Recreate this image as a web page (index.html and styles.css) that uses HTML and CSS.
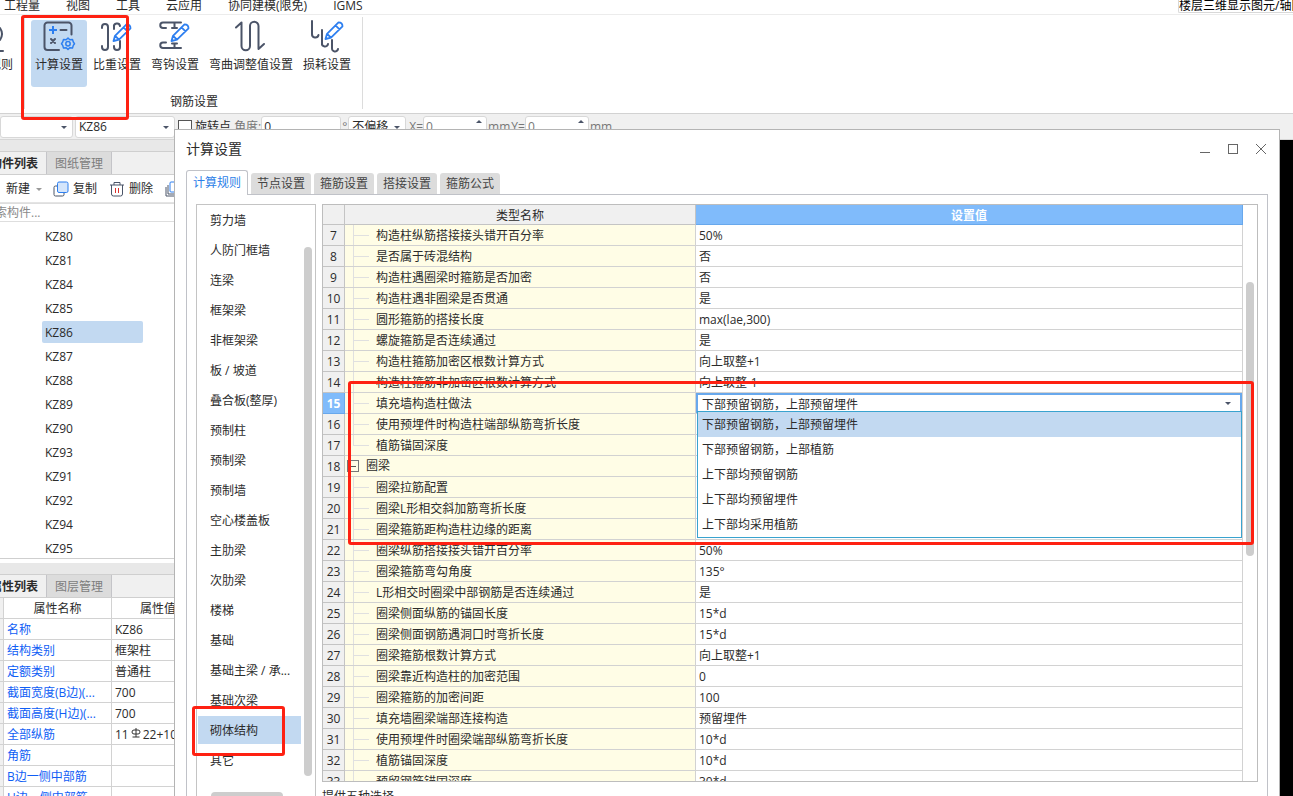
FILE: index.html
```html
<!DOCTYPE html>
<html lang="zh-CN">
<head>
<meta charset="utf-8">
<title>计算设置</title>
<link rel="stylesheet" href="styles.css">
</head>
<body>
<svg class="defs" aria-hidden="true">
  <symbol id="pencil" viewBox="0 0 34 34"><path d="M13.500 21l1.500-5.200L26.500 4.300c2.500 0 4 1.500 4 4L19 19.700zM15.200 16l3.800 3.700M23.500 7.300l4 4" fill="none" stroke="#2d7ff0" stroke-width="1.800" stroke-linejoin="round"/></symbol>
</svg>
<div class="app">
  <nav class="menubar">
    <a href="#">工程量</a><a href="#">视图</a><a href="#">工具</a><a href="#">云应用</a><a href="#">协同建模(限免)</a><a href="#">IGMS</a>
    <div class="menu-search">楼层三维显示图元/轴网</div>
  </nav>
  <div class="ribbon">
    <div class="ribbon-prev">
      <svg width="10" height="34" viewBox="0 0 10 34"><path d="M0 8q4 6 0 12M0 31h3" class="ink"/></svg>
      <span>规则</span>
    </div>
    <div class="ribbon-group">
      <div class="ribbon-buttons">
        <button class="tool active">
          <svg width="34" height="34" viewBox="0 0 34 34"><path class="ink" d="M29.500 14.500V5.500a3 3 0 0 0-3-3H5.500a3 3 0 0 0-3 3V27a3 3 0 0 0 3 3H17M18.500 10H24.500M9 19l4 4M13 19l-4 4"/><path class="accent" d="M7 10h8M11 6v8"/><path class="accent thin" d="M26 18l1.800 1.700 2.700-.3.800 2.600 1.200 1.700-1.200 1.700-.8 2.600-2.700-.3L26 29.400l-1.800-1.700-2.700.3-.8-2.600-1.200-1.700 1.200-1.700.8-2.600 2.700.3z"/><circle class="accent thin" cx="26" cy="23.700" r="2.200"/></svg>
          <span>计算设置</span></button>
        <button class="tool">
          <svg width="34" height="34" viewBox="0 0 34 34"><path class="ink" d="M2 8V7a3 3 0 0 1 6 0V27a3 3 0 0 1-6 0V26M14 9V7a3 3 0 0 1 6-1M20 21V27a3 3 0 0 1-6 0V26"/><use href="#pencil" width="34" height="34"/></svg>
          <span>比重设置</span></button>
        <button class="tool">
          <svg width="34" height="34" viewBox="0 0 34 34"><path class="ink" d="M23 2.500H5a2.700 2.700 0 0 0 0 5.500H8M16.500 3v5M14 8h5M23 28H5a2.700 2.700 0 0 1 0-5.500H8M16.500 28v-4M14 23.500h5"/><use href="#pencil" width="34" height="34"/></svg>
          <span>弯钩设置</span></button>
        <button class="tool">
          <svg width="34" height="34" viewBox="0 0 34 34"><path class="ink" d="M2 7.500L7.500 2.500V26a4.200 4.200 0 0 0 8.500 0V6a4.200 4.200 0 0 1 8.500 0V29L30 24"/></svg>
          <span>弯曲调整值设置</span></button>
        <button class="tool">
          <svg width="34" height="34" viewBox="0 0 34 34"><path class="ink" d="M2 1V14a3.300 3.300 0 0 0 6.500 1M12 10V23a3 3 0 0 0 6 1M22 20V28a3 3 0 0 0 6 1"/><use href="#pencil" x="2" y="-2" width="34" height="34"/></svg>
          <span>损耗设置</span></button>
      </div>
      <div class="group-label">钢筋设置</div>
    </div>
  </div>
  <div class="optionbar">
    <span class="pick pick-first"><select aria-label="楼层"><option></option></select></span>
    <span class="pick pick-member"><select aria-label="构件"><option>KZ86</option></select></span>
    <label class="check"><input type="checkbox">旋转点</label>
    <label class="field">角度:<input type="text" class="angle" value="0"></label><span class="dim">°</span>
    <span class="pick pick-offset"><select aria-label="偏移"><option>不偏移</option></select></span>
    <label class="field spin">X=<input type="text" value="0"></label><span class="dim">mm</span>
    <label class="field spin">Y=<input type="text" value="0"></label><span class="dim">mm</span>
  </div>
  <div class="workspace">
    <aside class="side">
      <div class="band"></div>
      <div class="side-tabs"><button class="on">构件列表</button><button>图纸管理</button></div>
      <div class="side-tools">
        <button class="new">新建</button><i class="caret"></i>
        <button><svg width="16" height="16" viewBox="0 0 16 16"><rect x="1" y="5" width="10" height="10" rx="1.500" fill="#fff" stroke="#4a5468"/><rect x="4.500" y="1" width="10.500" height="10.500" rx="1.500" fill="#d4e5fb" stroke="#2d7ff0"/></svg>复制</button>
        <button><svg width="16" height="16" viewBox="0 0 16 16"><path d="M1 4h14M5 4V1.500h6V4M2.500 4v9a2 2 0 0 0 2 2h7a2 2 0 0 0 2-2V4" fill="none" stroke="#4a5468"/><path d="M6.500 7v5M9.500 7v5" stroke="#d9302c"/></svg>删除</button>
        <button aria-label="层间复制"><svg width="16" height="16" viewBox="0 0 16 16"><rect x="5" y="1" width="10" height="10" rx="1" fill="#fff" stroke="#2d7ff0"/><path d="M3 4v9h9M1 6v9h9" fill="none" stroke="#4a5468"/></svg></button>
      </div>
      <input class="side-search" type="text" placeholder="搜索构件..." aria-label="搜索构件">
      <ul class="members">
        <li>KZ80</li><li>KZ81</li><li>KZ84</li><li>KZ85</li><li class="on">KZ86</li><li>KZ87</li><li>KZ88</li><li>KZ89</li><li>KZ90</li><li>KZ93</li><li>KZ91</li><li>KZ92</li><li>KZ94</li><li>KZ95</li>
      </ul>
      <div class="band"></div>
      <div class="side-tabs"><button class="on">属性列表</button><button>图层管理</button></div>
      <table class="props">
        <thead><tr><th class="gut"></th><th class="pn">属性名称</th><th>属性值</th></tr></thead>
        <tbody>
          <tr><td class="gut"></td><td>名称</td><td>KZ86</td></tr>
          <tr><td class="gut"></td><td>结构类别</td><td>框架柱</td></tr>
          <tr><td class="gut"></td><td>定额类别</td><td>普通柱</td></tr>
          <tr><td class="gut"></td><td>截面宽度(B边)(...</td><td>700</td></tr>
          <tr><td class="gut"></td><td>截面高度(H边)(...</td><td>700</td></tr>
          <tr><td class="gut"></td><td>全部纵筋</td><td>11<svg class="rebar" width="12" height="12" viewBox="0 0 12 12"><path d="M6 1v9M2.500 10h7" /><rect x="2" y="3" width="8" height="4" rx="2"/></svg>22+10</td></tr>
          <tr><td class="gut"></td><td>角筋</td><td></td></tr>
          <tr><td class="gut"></td><td>B边一侧中部筋</td><td></td></tr>
          <tr><td class="gut"></td><td>H边一侧中部筋</td><td></td></tr>
        </tbody>
      </table>
    </aside>
    <div class="canvas"></div>
  </div>
</div>

<section class="dialog" role="dialog" aria-labelledby="dlg-title">
  <header class="titlebar">
    <h1 id="dlg-title">计算设置</h1>
    <button aria-label="最小化"><svg width="12" height="12" viewBox="0 0 12 12"><path d="M1 9.500h10"/></svg></button>
    <button aria-label="最大化"><svg width="12" height="12" viewBox="0 0 12 12"><rect x="1.500" y="1.500" width="9" height="9"/></svg></button>
    <button aria-label="关闭"><svg width="12" height="12" viewBox="0 0 12 12"><path d="M1 1l10 10M11 1L1 11"/></svg></button>
  </header>
  <div class="tabs"><button class="on">计算规则</button><button>节点设置</button><button>箍筋设置</button><button>搭接设置</button><button>箍筋公式</button></div>
  <div class="panel">
    <div class="kinds">
      <ul>
        <li>剪力墙</li><li>人防门框墙</li><li>连梁</li><li>框架梁</li><li>非框架梁</li><li>板 / 坡道</li><li>叠合板(整厚)</li><li>预制柱</li><li>预制梁</li><li>预制墙</li><li>空心楼盖板</li><li>主肋梁</li><li>次肋梁</li><li>楼梯</li><li>基础</li><li>基础主梁 / 承...</li><li>基础次梁</li><li class="on">砌体结构</li><li>其它</li>
      </ul>
      <div class="kinds-track"><div class="thumb"></div></div>
      <div class="kinds-hthumb"></div>
    </div>
    <div class="content">
      <div class="frame">
        <table class="rules">
          <thead><tr><th class="num"></th><th class="name">类型名称</th><th class="val">设置值</th></tr></thead>
          <tbody>
            <tr><th>7</th><td><span class="leaf">构造柱纵筋搭接接头错开百分率</span></td><td>50%</td></tr>
            <tr><th>8</th><td><span class="leaf">是否属于砖混结构</span></td><td>否</td></tr>
            <tr><th>9</th><td><span class="leaf">构造柱遇圈梁时箍筋是否加密</span></td><td>否</td></tr>
            <tr><th>10</th><td><span class="leaf">构造柱遇非圈梁是否贯通</span></td><td>是</td></tr>
            <tr><th>11</th><td><span class="leaf">圆形箍筋的搭接长度</span></td><td>max(lae,300)</td></tr>
            <tr><th>12</th><td><span class="leaf">螺旋箍筋是否连续通过</span></td><td>是</td></tr>
            <tr><th>13</th><td><span class="leaf">构造柱箍筋加密区根数计算方式</span></td><td>向上取整+1</td></tr>
            <tr><th>14</th><td><span class="leaf">构造柱箍筋非加密区根数计算方式</span></td><td>向上取整-1</td></tr>
            <tr class="current"><th>15</th><td><span class="leaf">填充墙构造柱做法</span></td><td class="editing">
              <span class="pick editor"><select aria-label="填充墙构造柱做法"><option>下部预留钢筋，上部预留埋件</option><option>下部预留钢筋，上部植筋</option><option>上下部均预留钢筋</option><option>上下部均预留埋件</option><option>上下部均采用植筋</option></select></span>
              <ul class="popup" role="listbox" aria-label="设置值选项"><li class="on" role="option">下部预留钢筋，上部预留埋件</li><li role="option">下部预留钢筋，上部植筋</li><li role="option">上下部均预留钢筋</li><li role="option">上下部均预留埋件</li><li role="option">上下部均采用植筋</li></ul>
            </td></tr>
            <tr><th>16</th><td><span class="leaf">使用预埋件时构造柱端部纵筋弯折长度</span></td><td></td></tr>
            <tr><th>17</th><td><span class="leaf last">植筋锚固深度</span></td><td></td></tr>
            <tr><th>18</th><td><span class="branch"><button aria-label="折叠"></button>圈梁</span></td><td></td></tr>
            <tr><th>19</th><td><span class="leaf">圈梁拉筋配置</span></td><td></td></tr>
            <tr><th>20</th><td><span class="leaf">圈梁L形相交斜加筋弯折长度</span></td><td></td></tr>
            <tr><th>21</th><td><span class="leaf">圈梁箍筋距构造柱边缘的距离</span></td><td></td></tr>
            <tr><th>22</th><td><span class="leaf">圈梁纵筋搭接接头错开百分率</span></td><td>50%</td></tr>
            <tr><th>23</th><td><span class="leaf">圈梁箍筋弯勾角度</span></td><td>135°</td></tr>
            <tr><th>24</th><td><span class="leaf">L形相交时圈梁中部钢筋是否连续通过</span></td><td>是</td></tr>
            <tr><th>25</th><td><span class="leaf">圈梁侧面纵筋的锚固长度</span></td><td>15*d</td></tr>
            <tr><th>26</th><td><span class="leaf">圈梁侧面钢筋遇洞口时弯折长度</span></td><td>15*d</td></tr>
            <tr><th>27</th><td><span class="leaf">圈梁箍筋根数计算方式</span></td><td>向上取整+1</td></tr>
            <tr><th>28</th><td><span class="leaf">圈梁靠近构造柱的加密范围</span></td><td>0</td></tr>
            <tr><th>29</th><td><span class="leaf">圈梁箍筋的加密间距</span></td><td>100</td></tr>
            <tr><th>30</th><td><span class="leaf">填充墙圈梁端部连接构造</span></td><td>预留埋件</td></tr>
            <tr><th>31</th><td><span class="leaf">使用预埋件时圈梁端部纵筋弯折长度</span></td><td>10*d</td></tr>
            <tr><th>32</th><td><span class="leaf">植筋锚固深度</span></td><td>10*d</td></tr>
            <tr><th>33</th><td><span class="leaf">预留钢筋锚固深度</span></td><td>30*d</td></tr>
          </tbody>
        </table>
        <div class="rules-track"><div class="thumb"></div></div>
      </div>
      <p class="hint">提供五种选择</p>
    </div>
  </div>
</section>

<div class="mark mark-tool"></div>
<div class="mark mark-rows"></div>
<div class="mark mark-kind"></div>
</body>
</html>
```

FILE: styles.css
```css
* { box-sizing: border-box; }
html, body { height: 100%; }
body {
  margin: 0;
  overflow: hidden;
  position: relative;
  background: #fff;
  color: #2b2b2b;
  font: 12px/16px "Open Sans", "Noto Sans CJK SC", sans-serif;
}
button, input, select { font: inherit; color: inherit; margin: 0; }
button { border: 0; background: none; padding: 0; }
ul { list-style: none; margin: 0; padding: 0; }
.defs { position: absolute; width: 0; height: 0; }
.app { display: flex; flex-direction: column; height: 100%; overflow: hidden; }

/* menu */
.menubar {
  display: flex;
  gap: 26px;
  flex: none;
  height: 15px;
  padding-left: 4px;
  border-bottom: 1px solid #ececec;
  line-height: 12px;
  white-space: nowrap;
}
.menubar a { color: inherit; text-decoration: none; }
.menu-search {
  width: 115px;
  height: 13px;
  margin-left: auto;
  overflow: hidden;
  border: 1px solid #d8d8d8;
  border-width: 0 0 1px 1px;
  border-radius: 0 0 0 2px;
  color: #000;
}

/* ribbon */
.ribbon { display: flex; flex: none; height: 99px; border-bottom: 1px solid #d2d2d2; }
.ribbon-prev {
  display: flex;
  flex-direction: column;
  align-items: flex-start;
  width: 24px;
  padding-top: 5px;
  overflow: hidden;
}
.ribbon-prev span { margin-left: -11px; line-height: 22px; }
.ribbon-group {
  display: flex;
  flex-direction: column;
  height: 92px;
  margin-top: 2px;
  padding: 3px 7px 0 6px;
  border: 1px solid #dcdcdc;
  border-width: 0 1px;
}
.ribbon-buttons { display: flex; gap: 2px; }
.tool {
  display: flex;
  flex-direction: column;
  align-items: center;
  height: 67px;
  padding: 0 4px;
  border-radius: 3px;
  line-height: 22px;
}
.tool.active { background: #c2d9f1; }
.tool svg { overflow: visible; }
.ink { fill: none; stroke: #4b5468; stroke-width: 2; stroke-linecap: round; stroke-linejoin: round; }
.accent { fill: none; stroke: #2d7ff0; stroke-width: 2; }
.accent.thin { stroke-width: 1.5; stroke-linejoin: round; }
.group-label { margin-top: 7px; padding-left: 2px; text-align: center; }

/* option bar */
.optionbar {
  display: flex;
  align-items: center;
  flex: none;
  height: 26px;
  border-bottom: 1px solid #d6d6d6;
  background: #f0f0f0;
}
.pick { position: relative; display: inline-block; }
.pick::after {
  content: "";
  position: absolute;
  right: 6px;
  top: 10px;
  border: 3px solid transparent;
  border-top: 3px solid #4b5468;
  border-bottom: 0;
  pointer-events: none;
}
.pick select {
  display: block;
  appearance: none;
  width: 100%;
  height: 22px;
  padding: 0 3px;
  border: 1px solid #d8d8d8;
  border-radius: 3px;
  background: #fff;
}
.pick-first { width: 73px; }
.pick-member { width: 100px; margin: 0 3px 0 2px; }
.pick-offset { width: 58px; margin: 0 3px 0 0; }
.check { display: flex; align-items: center; gap: 3px; }
.check input { appearance: none; width: 14px; height: 14px; border: 1px solid #555; background: #fff; }
.field { display: flex; align-items: center; color: #777; }
.check + .field { margin-left: 3px; }
.field input {
  width: 64px;
  height: 22px;
  padding: 0 2px;
  border: 1px solid #d8d8d8;
  border-radius: 3px;
  background: #fff;
}
.field .angle { width: 80px; color: #2b2b2b; }
.dim { margin: 0 1px; color: #777; }
.spin { position: relative; }
.spin::after {
  content: "";
  position: absolute;
  right: 5px;
  top: 4px;
  border: 3px solid transparent;
  border-bottom: 3px solid #4b5468;
  border-top: 0;
}

/* left side */
.workspace { display: flex; flex: 1; min-height: 0; }
.canvas { flex: 1; background: #000; }
.side { width: 205px; flex: none; overflow: hidden; background: #fff; }
.band { height: 12px; border: 1px solid #cfcfcf; border-width: 0 0 1px; background: #e8e8e8; }
.side-tabs { display: flex; height: 23px; border-bottom: 1px solid #cfcfcf; background: #f0f0f0; }
.side-tabs button { width: 65px; padding-top: 2px; border-right: 1px solid #c4c4c8; background: #dcdcdc; color: #7d7d7d; }
.side-tabs .on { width: 47px; overflow: hidden; direction: rtl; padding-right: 8px; background: #f0f0f0; color: #2b2b2b; font-weight: 700; white-space: nowrap; }
.side-tools { display: flex; align-items: center; height: 28px; padding: 1px 0 0 6px; border-bottom: 1px solid #e4e4e4; }
.side-tools button { display: flex; align-items: center; gap: 4px; margin-right: 12px; }
.side-tools .new { margin-right: 6px; }
.caret { margin-right: 11px; border: 3px solid transparent; border-top-color: #999; border-bottom: 0; }
.side-search { display: block; width: 240px; height: 19px; margin-left: -18px; padding: 0; border: 1px solid #dedede; background: #fff; }
.side-search::placeholder { color: #8a8a8a; opacity: 1; }
.members { height: 337px; padding-top: 3px; border-bottom: 1px solid #cfcfcf; margin-bottom: 4px; }
.members li { height: 22px; margin: 0 62px 2px 42px; padding: 0 3px; line-height: 24px; border-radius: 2px; }
.members .on { background: #c2d9f1; }

.props { width: 205px; table-layout: fixed; border-spacing: 0; }
.props th, .props td { height: 21px; padding: 2px 3px 0; border: 1px solid #d2d2d2; border-width: 0 1px 1px 0; font-weight: 400; text-align: left; line-height: 16px; white-space: nowrap; }
.props .gut { width: 4px; padding: 0; background: #f0f0f0; }
.props .pn { width: 108px; }
.props thead th { text-align: center; }
.props td:nth-child(2) { color: #0f5ef5; }
.rebar { fill: none; stroke: #333; vertical-align: top; margin: 0 1px; }

/* dialog */
.dialog {
  position: absolute;
  left: 174px;
  right: 13px;
  top: 129px;
  bottom: 0;
  display: flex;
  flex-direction: column;
  padding: 0 11px;
  border: 1px solid #b4b4b4;
  border-bottom: 0;
  background: #fff;
}
.titlebar { display: flex; align-items: center; flex: none; gap: 16px; height: 40px; padding-bottom: 3px; }
.titlebar h1 { flex: 1; margin: 0; font-size: 14px; font-weight: 400; }
.titlebar button { width: 12px; height: 12px; }
.titlebar button:last-child { margin-right: 1px; }
.titlebar svg { display: block; fill: none; stroke: #666; }
.tabs { display: flex; align-items: flex-end; flex: none; gap: 3px; height: 24px; }
.tabs button { width: 60px; height: 21px; border-radius: 3px 3px 0 0; background: #dcdcdc; color: #444; line-height: 20px; }
.tabs .on { position: relative; width: 62px; height: 25px; margin-bottom: -1px; border: 1px solid #c0c2c8; border-bottom: 0; background: #fff; color: #2d7fe8; }
.panel { display: flex; flex: 1; gap: 6px; min-height: 0; padding: 9px 9px 0; border: 1px solid #c0c2c8; border-bottom: 0; }
.thumb { border-radius: 4px; background: #cdcdcd; }

.kinds { display: grid; grid-template: 1fr 4px / 1fr 14px; flex: none; width: 120px; overflow: hidden; border: 1px solid #c4c4c4; border-bottom: 0; }
.kinds li { height: 28px; margin: 0 0 2px 1px; padding-left: 12px; line-height: 30px; white-space: nowrap; }
.kinds ul { padding-top: 1px; min-height: 0; overflow: hidden; }
.kinds .on { background: #c2d9f1; }
.kinds-track { padding: 42px 3px 16px; display: flex; }
.kinds-track .thumb { flex: 1; }
.kinds-hthumb { width: 72px; margin-left: 14px; border-radius: 4px 4px 0 0; background: #cdcdcd; }

.content { display: flex; flex: 1; flex-direction: column; min-width: 0; }
.frame { display: flex; flex: 1; min-height: 0; overflow: hidden; border: 1px solid #bdbdbd; }
.hint { flex: none; height: 14px; margin: 0; padding-top: 7px; overflow: hidden; }
.rules { flex: 1; align-self: flex-start; table-layout: fixed; border-spacing: 0; }
.rules th, .rules td { height: 21px; padding: 2px 0 0; border: 1px solid #d2d2d2; border-width: 0 1px 1px 0; font-weight: 400; text-align: left; white-space: nowrap; line-height: 16px; }
.rules th { background: #f0f0f0; text-align: center; border-color: #c4c4c4; }
.rules thead th { height: 20px; }
.rules .num { width: 22px; }
.rules .name { width: 351px; }
.rules .val { border-color: #68a8ec; background: #80bbfb; color: #fff; font-weight: 700; }
.rules td:nth-child(2) { padding: 0; background: #fffde6; }
.rules td:nth-child(3) { padding-left: 3px; }
.rules .current th { background: #80bbfb; border-color: #68a8ec; color: #fff; font-weight: 700; }
.leaf {
  display: block;
  height: 20px;
  margin-left: 8px;
  padding-left: 23px;
  line-height: 22px;
  background: linear-gradient(#e0e0e0, #e0e0e0) 0 0 / 1px 100% no-repeat, linear-gradient(#e0e0e0, #e0e0e0) 0 10px / 16px 1px no-repeat;
}
.leaf.last { background-size: 1px 10px, 16px 1px; }
.branch { display: flex; align-items: center; gap: 7px; height: 20px; padding-left: 2px; line-height: 22px; }
.branch button { width: 12px; height: 12px; border: 1px solid #777; background: linear-gradient(#555, #555) center / 6px 1px no-repeat #fffde6; }
.rules td.editing { position: relative; padding: 0; }
.editor { display: block; }
.editor select { height: 20px; padding: 2px 4px 0; border: 2px solid #68a8ec; border-radius: 0; }
.editor::after { right: 11px; top: 9px; }
.popup { position: absolute; z-index: 1; left: 1px; right: 0; top: 18px; border: 1px solid #39a3cf; background: #fff; }
.popup li { height: 25px; padding-left: 4px; line-height: 26px; }
.popup .on { background: #c2d9f1; }
.rules-track { display: flex; flex: none; width: 14px; padding: 77px 3px 225px; }
.rules-track .thumb { flex: 1; }

/* highlight boxes drawn over the window */
.mark { position: absolute; border: 3px solid #fe2112; border-radius: 3px; pointer-events: none; }
.mark-tool { left: 21px; top: 15px; width: 108px; height: 105px; }
.mark-rows { left: 348px; right: 39px; top: 381px; height: 164px; }
.mark-kind { left: 192px; top: 706px; width: 93px; height: 50px; }
```
